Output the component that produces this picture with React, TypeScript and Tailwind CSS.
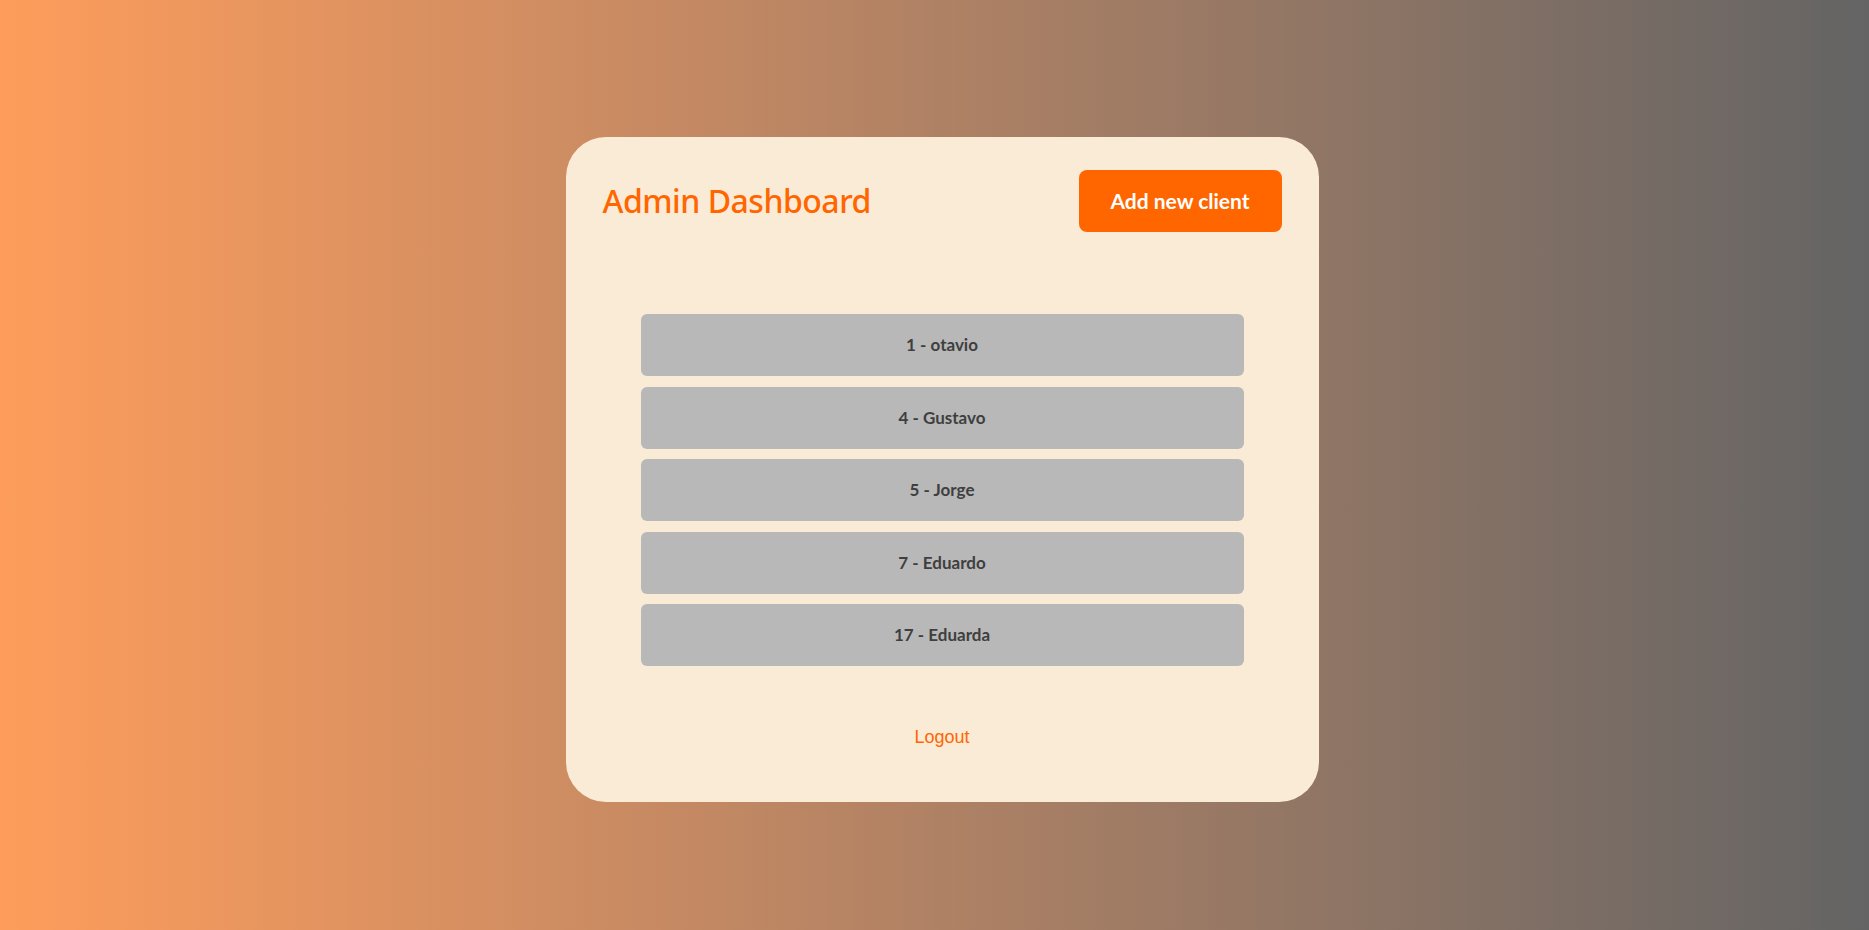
import React from 'react';

const clients = [
  { id: 1, name: 'otavio' },
  { id: 4, name: 'Gustavo' },
  { id: 5, name: 'Jorge' },
  { id: 7, name: 'Eduardo' },
  { id: 17, name: 'Eduarda' },
];

const App: React.FC = () => {
  return (
    <div className="min-h-screen w-full bg-gradient-to-r from-[#fe9d5b] to-[#646464] flex justify-center items-start pt-[137px] pl-[15px]">
      <div className="w-[753px] h-[665px] bg-[#faebd7] rounded-[40px] px-[37px] pt-[33px] flex flex-col items-center">
        <div className="w-full flex items-center justify-between">
          <h1 className="text-[#ff6600] text-[32px] font-medium leading-none tracking-[-0.5px] [font-family:'Noto_Sans','Open_Sans',sans-serif]">
            Admin Dashboard
          </h1>
          <button className="h-[62px] w-[203px] rounded-lg bg-[#ff6600] text-white text-[21px] font-bold [font-family:Lato,'Noto_Sans',sans-serif]">
            Add new client
          </button>
        </div>

        <ul className="mt-[82px] w-[603px] flex flex-col gap-[10.5px]">
          {clients.map(c => (
            <li
              key={c.id}
              className="h-[62px] rounded-md bg-[#b8b8b8] flex items-center justify-center text-[#3f3f3f] text-[17px] font-bold [font-family:Lato,'Noto_Sans',sans-serif]"
            >
              {c.id} - {c.name}
            </li>
          ))}
        </ul>

        <a href="#" className="mt-[61px] text-[#ff6600] text-[18px] leading-[21px] [font-family:'Liberation_Sans',Arial,sans-serif]">
          Logout
        </a>
      </div>
    </div>
  );
};

export default App;
